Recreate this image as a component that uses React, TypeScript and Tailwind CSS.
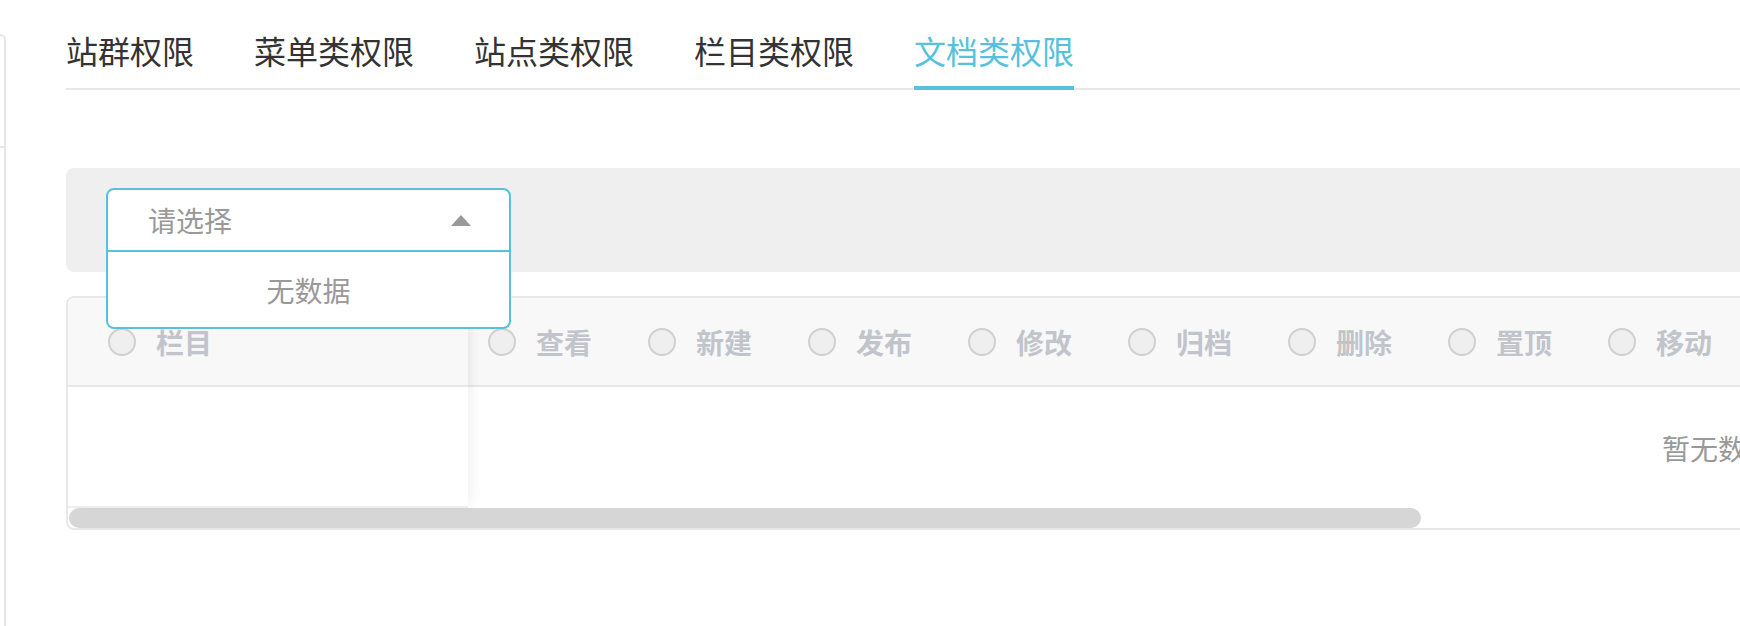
import React from 'react';

const tabs = ['站群权限', '菜单类权限', '站点类权限', '栏目类权限', '文档类权限'];
const actions = ['查看', '新建', '发布', '修改', '归档', '删除', '置顶', '移动', '撤回', '复制', '引用', '推送'];

function Radio() {
  return <span className="w-[28px] h-[28px] rounded-full border-2 border-[#d0d0d0] bg-[#efefef] shrink-0" />;
}

export default function App() {
  const active = 4;

  return (
    <div className="w-[1740px] h-[626px] bg-white flex overflow-hidden font-['Noto_Sans_CJK_SC',sans-serif]">
      {/* edge of the side card */}
      <div className="w-[6px] shrink-0 pt-[34px]">
        <div className="h-full border-r-2 border-t-2 border-[#e6e6e6] rounded-tr-[10px]">
          <div className="mt-[110px] border-t-2 border-[#e6e6e6]" />
        </div>
      </div>

      <div className="w-[1760px] shrink-0 pl-[60px]">
        {/* Tabs */}
        <div className="flex border-b-2 border-[#e8e8e8]">
          {tabs.map((t, i) => (
            <div
              key={t}
              className={
                i === active
                  ? 'mr-[60px] -mb-[2px] pt-[34px] pb-[20px] text-[32px] leading-[32px] text-[#57c1dc] border-b-4 border-[#57c1dc]'
                  : 'mr-[60px] -mb-[2px] pt-[34px] pb-[20px] text-[32px] leading-[32px] text-[#333] border-b-4 border-transparent'
              }
            >
              {t}
            </div>
          ))}
        </div>

        {/* Filter bar */}
        <div className="mt-[78px] h-[104px] bg-[#efefef] rounded-[8px] pl-[40px] pt-[20px]">
          <div className="relative w-[405px] z-20">
            <div className="h-[64px] bg-white border-2 border-[#57c1dc] rounded-t-[8px] flex items-center justify-between pl-[40px] pr-[38px]">
              <span className="text-[28px] leading-[32px] text-[#999]">请选择</span>
              <svg width="20" height="11" viewBox="0 0 20 11">
                <path d="M10 0 L20 11 L0 11 Z" fill="#999" />
              </svg>
            </div>
            <div className="absolute top-full left-0 w-full h-[77px] bg-white border-2 border-t-0 border-[#57c1dc] rounded-b-[8px] flex items-center justify-center">
              <span className="text-[28px] leading-[32px] text-[#999]">无数据</span>
            </div>
          </div>
        </div>

        {/* Table */}
        <div className="mt-[24px] border-2 border-[#e8e8e8] rounded-[8px] overflow-hidden">
          <div className="flex">
            <div className="w-[400px] shrink-0 border-b-2 border-[#eceef1] relative z-10 shadow-[8px_0_12px_-6px_rgba(0,0,0,0.08)]">
              <div className="h-[89px] bg-[#f8f8f8] border-b-2 border-[#e8e8e8] flex items-center pl-[40px] gap-[20px]">
                <Radio />
                <span className="text-[28px] leading-[32px] font-bold text-[#c1c4cb]">栏目</span>
              </div>
              <div className="h-[119px] bg-white" />
            </div>
            <div className="w-[2500px] shrink-0">
              <div className="h-[89px] bg-[#f8f8f8] border-b-2 border-[#e8e8e8] flex">
                {actions.map((a) => (
                  <div key={a} className="w-[160px] shrink-0 flex items-center pl-[20px] gap-[20px]">
                    <Radio />
                    <span className="text-[28px] leading-[32px] font-bold text-[#c1c4cb]">{a}</span>
                  </div>
                ))}
              </div>
              <div className="h-[121px] flex items-center justify-center">
                <span className="text-[28px] leading-[32px] text-[#999]">暂无数据</span>
              </div>
            </div>
          </div>
          <div className="h-[20px] pl-[1px]">
            <div className="w-[1352px] h-full rounded-full bg-[#d6d6d6]" />
          </div>
        </div>
      </div>
    </div>
  );
}
